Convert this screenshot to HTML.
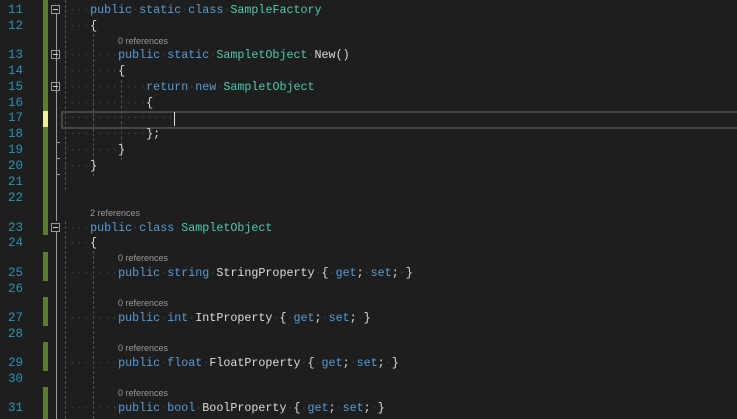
<!DOCTYPE html>
<html><head><meta charset="utf-8"><style>
body{margin:0;width:737px;height:419px;background:#1e1e1e;overflow:hidden;position:relative;font-family:"Liberation Mono",monospace;}
.ln{position:absolute;left:0;width:23px;text-align:right;color:#2b91af;font-size:12.5px;line-height:16px;}
.c{position:absolute;left:62px;font-size:11.7px;line-height:16px;color:#dcdcdc;white-space:pre;}
.r{position:absolute;font-family:"Liberation Sans",sans-serif;font-size:9px;color:#999;line-height:12px;}
.k{color:#569cd6}.t{color:#4ec9b0}.d{color:#24434e}
.g{position:absolute;left:43px;width:5px;background:#5a7d2e}
.f{position:absolute;left:51px;width:7px;height:7px;border:1px solid #999;}
.f:after{content:"";position:absolute;left:1px;top:3px;width:5px;height:1px;background:#ccc}
.v{position:absolute;border-left:1px dashed #555;width:0}
.tk{position:absolute;left:56px;width:4px;height:1px;background:#999}
</style></head><body>
<div class="g" style="top:0;height:235px"></div>
<div class="g" style="top:111px;height:16px;background:#eff09a"></div>
<div class="g" style="top:252px;height:29px"></div>
<div class="g" style="top:297px;height:29px"></div>
<div class="g" style="top:342px;height:29px"></div>
<div class="g" style="top:387px;height:32px"></div>
<div style="position:absolute;left:56px;top:14px;width:1px;height:207px;background:#999"></div>
<div style="position:absolute;left:56px;top:232px;width:1px;height:187px;background:#999"></div>
<div class="tk" style="top:142px"></div><div class="tk" style="top:158px"></div><div class="tk" style="top:174px"></div>
<div class="f" style="top:5px"></div><div class="f" style="top:50px"></div><div class="f" style="top:82px"></div><div class="f" style="top:223px"></div>
<div class="v" style="left:65px;top:0;height:190px"></div>
<div class="v" style="left:65px;top:221px;height:198px"></div>
<div class="v" style="left:93px;top:34px;height:142px"></div>
<div class="v" style="left:93px;top:251px;height:168px"></div>
<div class="v" style="left:121px;top:80px;height:80px"></div>
<div style="position:absolute;left:61px;top:111px;width:680px;height:14px;border:2px solid #464646"></div>
<div style="position:absolute;left:174px;top:112px;width:1px;height:14px;background:#ddd"></div>

<div class="ln" style="top:2px">11</div><div class="c" style="top:2px"><span class="d">····</span><span class="k">public</span><span class="d">·</span><span class="k">static</span><span class="d">·</span><span class="k">class</span><span class="d">·</span><span class="t">SampleFactory</span></div>
<div class="ln" style="top:18px">12</div><div class="c" style="top:18px"><span class="d">····</span>{</div>
<div class="r" style="left:118px;top:35px">0 references</div>
<div class="ln" style="top:47px">13</div><div class="c" style="top:47px"><span class="d">········</span><span class="k">public</span><span class="d">·</span><span class="k">static</span><span class="d">·</span><span class="t">SampletObject</span><span class="d">·</span>New()</div>
<div class="ln" style="top:63px">14</div><div class="c" style="top:63px"><span class="d">········</span>{</div>
<div class="ln" style="top:79px">15</div><div class="c" style="top:79px"><span class="d">············</span><span class="k">return</span><span class="d">·</span><span class="k">new</span><span class="d">·</span><span class="t">SampletObject</span></div>
<div class="ln" style="top:95px">16</div><div class="c" style="top:95px"><span class="d">············</span>{</div>
<div class="ln" style="top:110px">17</div><div class="c" style="top:110px"><span class="d">················</span></div>
<div class="ln" style="top:126px">18</div><div class="c" style="top:126px"><span class="d">············</span>};</div>
<div class="ln" style="top:142px">19</div><div class="c" style="top:142px"><span class="d">········</span>}</div>
<div class="ln" style="top:158px">20</div><div class="c" style="top:158px"><span class="d">····</span>}</div>
<div class="ln" style="top:174px">21</div>
<div class="ln" style="top:190px">22</div>
<div class="r" style="left:90px;top:207px">2 references</div>
<div class="ln" style="top:220px">23</div><div class="c" style="top:220px"><span class="d">····</span><span class="k">public</span><span class="d">·</span><span class="k">class</span><span class="d">·</span><span class="t">SampletObject</span></div>
<div class="ln" style="top:235px">24</div><div class="c" style="top:235px"><span class="d">····</span>{</div>
<div class="r" style="left:118px;top:252px">0 references</div>
<div class="ln" style="top:265px">25</div><div class="c" style="top:265px"><span class="d">········</span><span class="k">public</span><span class="d">·</span><span class="k">string</span><span class="d">·</span>StringProperty<span class="d">·</span>{<span class="d">·</span><span class="k">get</span>;<span class="d">·</span><span class="k">set</span>;<span class="d">·</span>}</div>
<div class="ln" style="top:281px">26</div>
<div class="r" style="left:118px;top:297px">0 references</div>
<div class="ln" style="top:310px">27</div><div class="c" style="top:310px"><span class="d">········</span><span class="k">public</span><span class="d">·</span><span class="k">int</span><span class="d">·</span>IntProperty<span class="d">·</span>{<span class="d">·</span><span class="k">get</span>;<span class="d">·</span><span class="k">set</span>;<span class="d">·</span>}</div>
<div class="ln" style="top:326px">28</div>
<div class="r" style="left:118px;top:342px">0 references</div>
<div class="ln" style="top:355px">29</div><div class="c" style="top:355px"><span class="d">········</span><span class="k">public</span><span class="d">·</span><span class="k">float</span><span class="d">·</span>FloatProperty<span class="d">·</span>{<span class="d">·</span><span class="k">get</span>;<span class="d">·</span><span class="k">set</span>;<span class="d">·</span>}</div>
<div class="ln" style="top:371px">30</div>
<div class="r" style="left:118px;top:387px">0 references</div>
<div class="ln" style="top:400px">31</div><div class="c" style="top:400px"><span class="d">········</span><span class="k">public</span><span class="d">·</span><span class="k">bool</span><span class="d">·</span>BoolProperty<span class="d">·</span>{<span class="d">·</span><span class="k">get</span>;<span class="d">·</span><span class="k">set</span>;<span class="d">·</span>}</div>
</body></html>
